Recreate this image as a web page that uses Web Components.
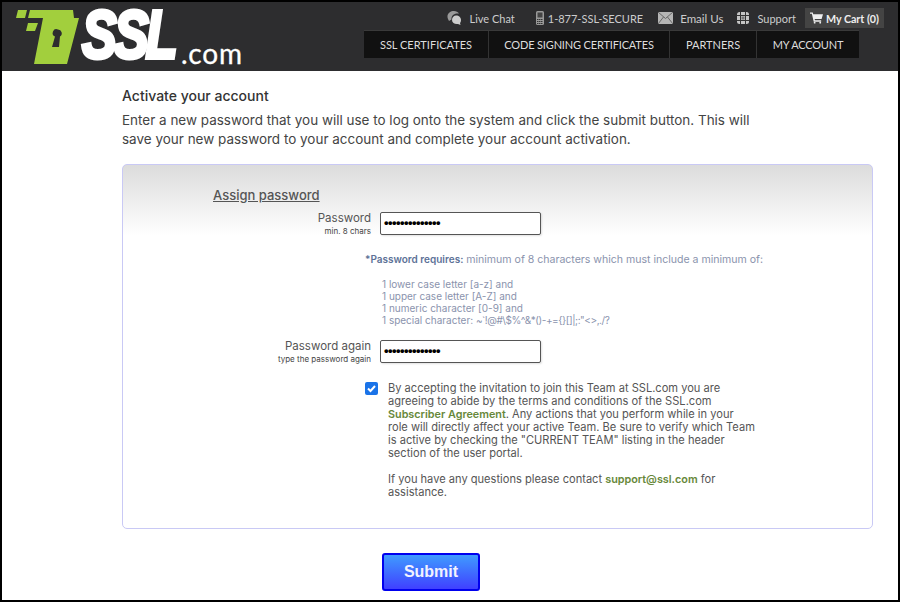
<!DOCTYPE html>
<html>
<head>
<meta charset="utf-8">
<title>Activate your account</title>
<style>
html, body { margin: 0; padding: 0; background: #000; }
body { width: 900px; height: 602px; box-sizing: border-box; padding: 2px 2px 2px 2px; overflow: hidden; font-family: Inter, "Liberation Sans", sans-serif; }
</style>
</head>
<body>
<ssl-page>
    <ssl-header></ssl-header>
    <ssl-intro></ssl-intro>
    <ssl-panel>
        <ssl-field label="Password" hint="min. 8 chars"></ssl-field>
        <ssl-rules></ssl-rules>
        <ssl-field label="Password again" hint="type the password again"></ssl-field>
        <ssl-terms></ssl-terms>
    </ssl-panel>
    <ssl-submit>Submit</ssl-submit>
</ssl-page>
<script>
class SslPage extends HTMLElement {
    constructor() {
        super();
        this.attachShadow({ mode: 'open' });
        this.shadowRoot.innerHTML = `<style>
            :host { display: flex; flex-direction: column; height: 598px; background: #fff; overflow: hidden; }
        </style><slot></slot>`;
    }
}
class SslHeader extends HTMLElement {
    constructor() {
        super();
        this.attachShadow({ mode: 'open' });
        this.shadowRoot.innerHTML = `<style>
            :host { display: flex; justify-content: space-between; height: 69px; background: #2d2d2f; color: #ddd; font-family: Lato, "Liberation Sans", sans-serif; flex: none; }
            .logo { display: flex; align-items: flex-start; padding: 6px 0 0 13px; }
            .logo svg { flex: none; }
            .word { display: block; flex: none; height: 60px; margin: -2px -17px 0 1px; font: italic 700 65px/60px "Liberation Sans", sans-serif; color: #fff; -webkit-text-stroke: 4px #fff; letter-spacing: -3.5px; transform: scale(.8, 1.06); transform-origin: left bottom; }
            .com { font: 400 28px/26px Lato, sans-serif; color: #fff; margin: 32px 0 0 0; letter-spacing: .8px; -webkit-text-stroke: .3px #fff; }
            .right { display: flex; flex-direction: column; align-items: flex-end; padding-right: 14px; }
            .top { display: flex; align-items: center; height: 20px; margin-top: 6px; margin-bottom: 2px; font-size: 11px; color: #ccc; }
            .top span { display: flex; align-items: center; }
            .chat { margin-right: 21px; } .chat svg { margin-right: 8px; }
            .phone { margin-right: 15px; } .phone svg { margin-right: 4px; }
            .mail { margin-right: 14px; font-size: 11.500px; } .mail svg { margin-right: 7px; }
            .supp { margin-right: 9px; } .supp svg { margin-right: 8px; }
            .top .cart { background: #444; height: 20px; padding: 0 5px; color: #eee; font-weight: 700; font-size: 10.700px; margin-right: 0; }
            .cart svg { margin-right: 3px; }
            nav { display: flex; height: 28px; background: #111; margin-right: 25px; font-size: 11px; color: #ddd; border-top: 1px solid #3a3a3a; box-sizing: border-box; }
            nav a { display: flex; align-items: center; justify-content: center; border-right: 1px solid #333; box-sizing: border-box; }
            nav a:nth-child(1) { width: 125px; }
            nav a:nth-child(2) { width: 181px; letter-spacing: -.16px; }
            nav a:nth-child(3) { width: 87px; }
            nav a:nth-child(4) { width: 102px; letter-spacing: -.2px; border-right: none; }
        </style>
        <div class="logo">
            <svg width="66" height="58" viewBox="15 8 66 58">
                <path fill="#a2cf3d" d="M18 10h9l-2 8h-9z M28 23h10l-3 8h-9z"/>
                <path fill="#a2cf3d" d="M30 10h43l1 8h5L67 64H34l9-46H28z"/>
                <path fill="#2d2d2f" d="M58 29.500a3.800 3.800 0 0 1 2 7L59 47h-7l3-10.500a3.800 3.800 0 0 1 3-7z"/>
            </svg>
            <span class="word">SSL</span><span class="com">.com</span>
        </div>
        <div class="right">
            <div class="top">
                <span class="chat"><svg width="14" height="14" viewBox="0 0 14 14"><path fill="#999" d="M1 8C-1 3 3 0 7 0c2 0 4 1 5 2.500C8 2 4 4 4.500 8.500L2 10z"/><path fill="#ccc" d="M9 4.500c3 0 5 2 5 4.500 0 1.500-.5 2.500-1 3l.5 2-2.500-1c-3 .5-6-1-6-4s2-4.500 4-4.500z"/></svg>Live Chat</span>
                <span class="phone"><svg width="8" height="14" viewBox="0 0 8 14"><rect width="8" height="14" rx="1.500" fill="#999"/><rect x="1.500" y="1.500" width="5" height="5" fill="#444"/><path stroke="#333" stroke-dasharray="1.500 .5" d="M1 8.500h6M1 10.500h6M1 12.500h6"/></svg>1-877-SSL-SECURE</span>
                <span class="mail"><svg width="15" height="12" viewBox="0 0 15 12"><rect width="15" height="12" fill="#b5b5b5"/><path fill="none" stroke="#666" d="M0 0l7.500 6.500L15 0M0 12l5.500-7M15 12l-5.500-7"/></svg>Email Us</span>
                <span class="supp"><svg width="12" height="12" viewBox="0 0 12 12"><rect width="12" height="12" rx="2.500" fill="#c5c5c5"/><path stroke="#333" stroke-width="1" d="M3.500 0v12M8.500 0v12M0 3.500h12M0 8.500h12"/><rect x="4.500" y="4.500" width="3" height="3" fill="#777"/></svg>Support</span>
                <span class="cart"><svg width="13" height="12" viewBox="0 0 14 12"><path fill="#eee" d="M0 0h3l.5 2H14l-1.500 5H5l.3 1.500H12V10H4L2 1.500H0z"/><circle fill="#eee" cx="5" cy="11" r="1"/><circle fill="#eee" cx="11" cy="11" r="1"/></svg>My Cart (0)</span>
            </div>
            <nav><a>SSL CERTIFICATES</a><a>CODE SIGNING CERTIFICATES</a><a>PARTNERS</a><a>MY ACCOUNT</a></nav>
        </div>`;
    }
}
class SslIntro extends HTMLElement {
    constructor() {
        super();
        this.attachShadow({ mode: 'open' });
        this.shadowRoot.innerHTML = `<style>
            :host { display: block; padding: 16px 0 0 120px; width: 640px; flex: none; color: #444; font-size: 13.480px; line-height: 19px; }
            h1 { font-size: 14px; font-weight: 500; color: #333; margin: 0 0 6px; line-height: 18px; }
            p { margin: 0; }
        </style>
        <h1>Activate your account</h1>
        <p>Enter a new password that you will use to log onto the system and click the submit button. This will save your new password to your account and complete your account activation.</p>`;
    }
}
class SslPanel extends HTMLElement {
    constructor() {
        super();
        this.attachShadow({ mode: 'open' });
        this.shadowRoot.innerHTML = `<style>
            :host { display: block; flex: none; box-sizing: border-box; width: 751px; height: 365px; margin: 15px 0 0 120px; border: 1px solid #c9c9f5; border-radius: 5px; background: linear-gradient(#dcdcdc, #fff 71px); padding-top: 22px; color: #555; }
            h2 { margin: 0 0 8px 90px; font-size: 13px; font-weight: 500; color: #555; text-decoration: underline; line-height: 17px; }
        </style>
        <h2>Assign password</h2>
        <slot></slot>`;
    }
}
class SslField extends HTMLElement {
    constructor() {
        super();
        this.attachShadow({ mode: 'open' });
        const label = this.getAttribute('label');
        const hint = this.getAttribute('hint');
        this.shadowRoot.innerHTML = `<style>
            :host { display: flex; align-items: flex-start; height: 24px; color: #555; }
            .lab { width: 248px; text-align: right; flex: none; }
            .t { font-size: 11.500px; line-height: 13px; }
            .h { font-size: 8px; line-height: 12px; color: #444; }
            .box { margin-left: 9px; box-sizing: border-box; width: 161px; height: 23px; background: #fff; border: 1px solid #555; border-radius: 2px; box-shadow: 1px 1px 2px rgba(0,0,0,.12); padding-left: 3px; font: 700 13px/20px "Liberation Sans", sans-serif; letter-spacing: -.55px; color: #000; }
        </style>
        <div class="lab"><div class="t">${label}</div><div class="h">${hint}</div></div>
        <div class="box">&#8226;&#8226;&#8226;&#8226;&#8226;&#8226;&#8226;&#8226;&#8226;&#8226;&#8226;&#8226;&#8226;&#8226;</div>`;
    }
}
class SslRules extends HTMLElement {
    constructor() {
        super();
        this.attachShadow({ mode: 'open' });
        this.shadowRoot.innerHTML = `<style>
            :host { display: block; padding: 17px 0 0 242px; height: 80px; font-size: 10.550px; line-height: 12px; color: #8a93ad; margin-bottom: 7px; }
            b { color: #5d7297; font-weight: 600; font-size: 10px; }
            ul { list-style: none; margin: 12px 0 0 17px; padding: 0; font-size: 10px; }
            .chars { letter-spacing: -.45px; }
        </style>
        <div><b>*Password requires:</b> minimum of 8 characters which must include a minimum of:</div>
        <ul><li>1 lower case letter [a-z] and</li><li>1 upper case letter [A-Z] and</li><li>1 numeric character [0-9] and</li><li>1 special character: <span class="chars">~\`!@#\\$%^&amp;*()-+={}[]|;:"&lt;&gt;,./?</span></li></ul>`;
    }
}
class SslTerms extends HTMLElement {
    constructor() {
        super();
        this.attachShadow({ mode: 'open' });
        this.shadowRoot.innerHTML = `<style>
            :host { display: flex; margin: 18px 0 0 242px; font-size: 11.100px; line-height: 13px; color: #555; }
            .check { flex: none; width: 13px; height: 13px; margin: 0 10px 0 0; border-radius: 2px; background: #1a73e8; display: flex; align-items: center; justify-content: center; }
            .copy { width: 380px; }
            a { color: #67883a; font-weight: 600; font-size: 10.800px; }
            p { margin: 0 0 13px; }
        </style>
        <div class="check"><svg width="11" height="11" viewBox="0 0 11 11"><path fill="none" stroke="#fff" stroke-width="2" d="M2 5.500l2.500 2.500L9 3"/></svg></div>
        <div class="copy">
            <p>By accepting the invitation to join this Team at SSL.com you are<br>agreeing to abide by the terms and conditions of the SSL.com<br><a>Subscriber Agreement</a>. Any actions that you perform while in your<br>role will directly affect your active Team. Be sure to verify which Team<br>is active by checking the "CURRENT TEAM" listing in the header<br>section of the user portal.</p>
            <p>If you have any questions please contact <a>support@ssl.com</a> for<br>assistance.</p>
        </div>`;
    }
}
class SslSubmit extends HTMLElement {
    constructor() {
        super();
        this.attachShadow({ mode: 'open' });
        this.shadowRoot.innerHTML = `<style>
            :host { display: flex; align-self: flex-start; align-items: center; justify-content: center; flex: none; box-sizing: border-box; width: 98px; height: 38px; margin: 24px 0 0 380px; border: 2px solid #0000ee; border-radius: 3px; background: linear-gradient(#3f9bff, #4040ff); color: #f2f2ff; font: 700 16px "Liberation Sans", sans-serif; }
        </style><slot></slot>`;
    }
}
customElements.define('ssl-page', SslPage);
customElements.define('ssl-header', SslHeader);
customElements.define('ssl-intro', SslIntro);
customElements.define('ssl-panel', SslPanel);
customElements.define('ssl-field', SslField);
customElements.define('ssl-rules', SslRules);
customElements.define('ssl-terms', SslTerms);
customElements.define('ssl-submit', SslSubmit);
</script>
</body>
</html>
